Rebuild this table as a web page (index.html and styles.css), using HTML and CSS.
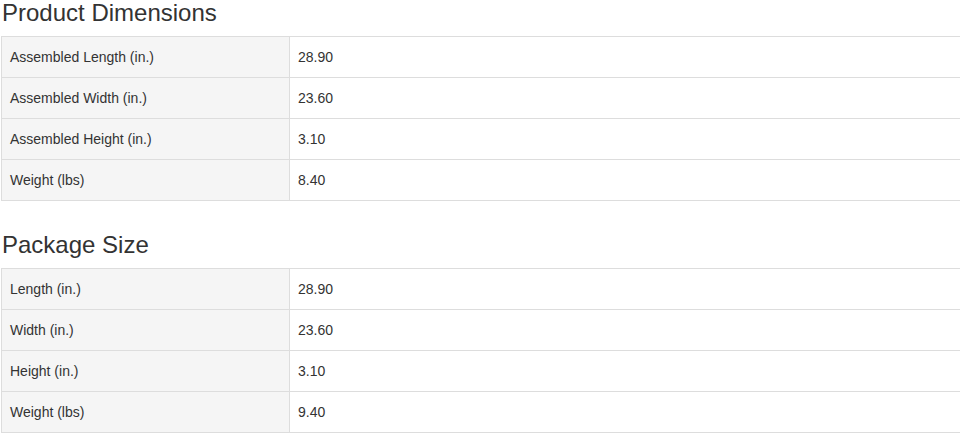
FILE: index.html
```html
<!DOCTYPE html>
<html lang="en">
<head>
    <meta charset="UTF-8">
    <meta name="viewport" content="width=device-width, initial-scale=1.0">
    <title>Specifications</title>
    <link rel="stylesheet" href="styles.css">
</head>
<body>
    <div class="specs">
        <section class="spec-group">
            <h2>Product Dimensions</h2>
            <table class="spec-table">
                <tr><td>Assembled Length (in.)</td><td>28.90</td></tr>
                <tr><td>Assembled Width (in.)</td><td>23.60</td></tr>
                <tr><td>Assembled Height (in.)</td><td>3.10</td></tr>
                <tr><td>Weight (lbs)</td><td>8.40</td></tr>
            </table>
        </section>
        <section class="spec-group">
            <h2>Package Size</h2>
            <table class="spec-table">
                <tr><td>Length (in.)</td><td>28.90</td></tr>
                <tr><td>Width (in.)</td><td>23.60</td></tr>
                <tr><td>Height (in.)</td><td>3.10</td></tr>
                <tr><td>Weight (lbs)</td><td>9.40</td></tr>
            </table>
        </section>
    </div>
</body>
</html>
```

FILE: styles.css
```css
* {
    box-sizing: border-box;
}

body {
    margin: 0;
    padding: 0;
    background: #fff;
    font-family: "Liberation Sans", Arial, sans-serif;
    font-size: 14px;
    color: #333;
    overflow: hidden;
}

.specs {
    padding-left: 1px;
}

.spec-group + .spec-group {
    margin-top: 31px;
}

.spec-group h2 {
    margin: 0 0 10px 1px;
    font-size: 24px;
    font-weight: 400;
    line-height: 26px;
    color: #333;
}

.spec-table {
    width: 1000px;
    border-collapse: collapse;
    border: 1px solid #ddd;
}

.spec-table td {
    height: 41px;
    padding: 10px 8px;
    line-height: 20px;
    border: 1px solid #ddd;
    vertical-align: middle;
}

.spec-table td:first-child {
    width: 288px;
    background: #f5f5f5;
}
```
